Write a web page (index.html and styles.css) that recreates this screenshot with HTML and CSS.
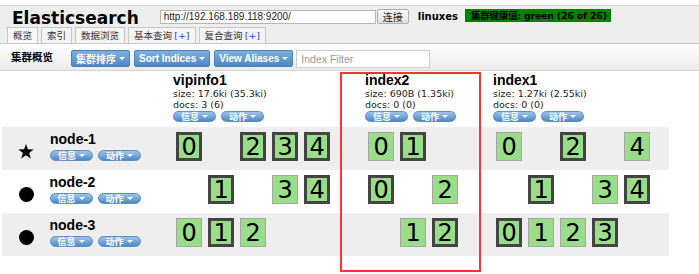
FILE: index.html
```html
<!DOCTYPE html>
<html lang="zh-CN">
<head>
    <meta charset="UTF-8">
    <meta name="viewport" content="width=device-width, initial-scale=1.0">
    <title>Elasticsearch</title>

    <link rel="stylesheet" href="styles.css">

</head>
<body>
<div class="app">
    <div class="header">
        <div class="header-top">
            <h1 class="logo">Elasticsearch</h1>
            <input class="url" type="text" value="http://192.168.189.118:9200/">
            <button class="connect" type="button">连接</button>
            <span class="cluster-name">linuxes</span>
            <span class="health">集群健康值: green (26 of 26)</span>
        </div>
        <ul class="tabs">
            <li class="active">概览</li>
            <li>索引</li>
            <li>数据浏览</li>
            <li>基本查询 <span class="plus">[+]</span></li>
            <li>复合查询 <span class="plus">[+]</span></li>
        </ul>
    </div>

    <div class="toolbar">
        <span class="toolbar-title">集群概览</span>
        <button class="menu-btn" type="button">集群排序<span class="caret"></span></button>
        <button class="menu-btn" type="button">Sort Indices<span class="caret"></span></button>
        <button class="menu-btn" type="button">View Aliases<span class="caret"></span></button>
        <input class="filter" type="text" placeholder="Index Filter">
    </div>

    <table class="cluster">
        <tr class="index-row">
            <td></td>
            <td class="index-head">
                <div class="index-name">vipinfo1</div>
                <div class="meta">size: 17.6ki (35.3ki)</div>
                <div class="meta">docs: 3 (6)</div>
                <div class="pills"><span class="pill">信息<span class="caret"></span></span><span class="pill">动作<span class="caret"></span></span></div>
            </td>
            <td class="index-head">
                <div class="index-name">index2</div>
                <div class="meta">size: 690B (1.35ki)</div>
                <div class="meta">docs: 0 (0)</div>
                <div class="pills"><span class="pill">信息<span class="caret"></span></span><span class="pill">动作<span class="caret"></span></span></div>
            </td>
            <td class="index-head">
                <div class="index-name">index1</div>
                <div class="meta">size: 1.27ki (2.55ki)</div>
                <div class="meta">docs: 0 (0)</div>
                <div class="pills"><span class="pill">信息<span class="caret"></span></span><span class="pill">动作<span class="caret"></span></span></div>
            </td>
        </tr>

        <!-- node-1 -->
        <tr class="node-row odd">
            <td class="node">
                <div class="node-box">
                    <svg class="icon" width="16" height="15" viewBox="0 0 16 15"><polygon points="8,0 9.9,5.3 15.6,5.4 11.1,8.9 12.8,14.6 8,11.2 3.2,14.6 4.9,8.9 0.4,5.4 6.1,5.3" fill="#000"/></svg>
                    <div class="node-info">
                        <div class="node-name">node-1</div>
                        <div class="pills"><span class="pill">信息<span class="caret"></span></span><span class="pill">动作<span class="caret"></span></span></div>
                    </div>
                </div>
            </td>
            <td class="shards">
                <span class="shard primary">0</span><span class="shard none"></span><span class="shard primary">2</span><span class="shard primary">3</span><span class="shard primary">4</span>
            </td>
            <td class="shards">
                <span class="shard">0</span><span class="shard primary">1</span><span class="shard none"></span>
            </td>
            <td class="shards">
                <span class="shard">0</span><span class="shard none"></span><span class="shard primary">2</span><span class="shard none"></span><span class="shard">4</span>
            </td>
        </tr>

        <!-- node-2 -->
        <tr class="node-row">
            <td class="node">
                <div class="node-box">
                    <span class="icon dot"></span>
                    <div class="node-info">
                        <div class="node-name">node-2</div>
                        <div class="pills"><span class="pill">信息<span class="caret"></span></span><span class="pill">动作<span class="caret"></span></span></div>
                    </div>
                </div>
            </td>
            <td class="shards">
                <span class="shard none"></span><span class="shard primary">1</span><span class="shard none"></span><span class="shard">3</span><span class="shard primary">4</span>
            </td>
            <td class="shards">
                <span class="shard primary">0</span><span class="shard none"></span><span class="shard">2</span>
            </td>
            <td class="shards">
                <span class="shard none"></span><span class="shard primary">1</span><span class="shard none"></span><span class="shard">3</span><span class="shard primary">4</span>
            </td>
        </tr>

        <!-- node-3 -->
        <tr class="node-row odd">
            <td class="node">
                <div class="node-box">
                    <span class="icon dot"></span>
                    <div class="node-info">
                        <div class="node-name">node-3</div>
                        <div class="pills"><span class="pill">信息<span class="caret"></span></span><span class="pill">动作<span class="caret"></span></span></div>
                    </div>
                </div>
            </td>
            <td class="shards">
                <span class="shard">0</span><span class="shard primary">1</span><span class="shard">2</span>
            </td>
            <td class="shards">
                <span class="shard none"></span><span class="shard">1</span><span class="shard primary">2</span>
            </td>
            <td class="shards">
                <span class="shard primary">0</span><span class="shard">1</span><span class="shard">2</span><span class="shard primary">3</span>
            </td>
        </tr>
    </table>

    <div class="mark"></div>
</div>
</body>
</html>
```

FILE: styles.css
```css
* {
    box-sizing: border-box;
}

body {
    margin: 0;
    background: #fff;
    color: #000;
    font-family: "DejaVu Sans", "Noto Sans CJK SC", sans-serif;
}

.app {
    position: relative;
    min-height: 274px;
}

/* header */
.header {
    margin-top: 5px;
    border-top: 1px solid #d9d9d9;
    background: #eee;
}

.header-top {
    display: flex;
    align-items: center;
    height: 21px;
    padding-left: 12px;
}

.logo {
    margin: 2px 0 0;
    font: bold 17px/20px "DejaVu Sans", sans-serif;
}

.url {
    width: 216px;
    height: 14px;
    margin-left: 21px;
    padding: 0 3px;
    border: 1px solid #b5b5b5;
    background: #fff;
    color: #222;
    font: 10px "Liberation Sans", sans-serif;
}

.connect {
    height: 15px;
    margin-left: 1px;
    padding: 0 5px;
    border: 1px solid #adadad;
    border-radius: 2px;
    background: linear-gradient(#fafafa, #e0e0e0);
    color: #222;
    font: 10px/13px "Noto Sans CJK SC", sans-serif;
}

.cluster-name {
    margin-left: 9px;
    font: bold 10px "DejaVu Sans", sans-serif;
}

.health {
    height: 13px;
    margin: -3px 0 0 7px;
    padding: 0 4px 0 6px;
    background: #008000;
    color: #000;
    font: bold 9.5px/13px "DejaVu Sans", "Noto Sans CJK SC", sans-serif;
    letter-spacing: -0.25px;
    white-space: nowrap;
}

.tabs {
    display: flex;
    gap: 3px;
    height: 16px;
    margin: 0;
    padding: 0 0 0 7px;
    list-style: none;
}

.tabs li {
    height: 16px;
    padding: 0 5px;
    border: 1px solid #c6c6c6;
    border-bottom: 0;
    background: #f4f4f4;
    color: #333;
    font: 9.5px/15px "Noto Sans CJK SC", sans-serif;
}

.tabs li.active {
    background: #f8f8f8;
}

.plus {
    color: #2a3fd0;
    font-family: "DejaVu Sans", sans-serif;
}

/* toolbar */
.toolbar {
    display: flex;
    align-items: flex-start;
    height: 28px;
    padding: 6px 0 0 11px;
    border-top: 1px solid #c9c9c9;
    border-bottom: 1px solid #d5d5d5;
    background: linear-gradient(#fff, #ebebeb);
}

.toolbar-title {
    margin-right: 18px;
    font: bold 10.5px/14px "Noto Sans CJK SC", sans-serif;
}

.menu-btn {
    display: flex;
    align-items: center;
    gap: 3px;
    height: 17px;
    margin-right: 4px;
    padding: 0 4px;
    border: 1px solid #4c80b9;
    border-radius: 2px;
    background: linear-gradient(#7fb0e0, #4f87c3);
    color: #fff;
    font: bold 10px "Liberation Sans", "Noto Sans CJK SC", sans-serif;
}

.caret {
    width: 0;
    height: 0;
    border-left: 3px solid transparent;
    border-right: 3px solid transparent;
    border-top: 3px solid #fff;
}

.filter {
    width: 134px;
    height: 18px;
    margin-left: -1px;
    padding: 0 4px;
    border: 1px solid #ccc;
    background: #fff;
    font: 10.5px "Liberation Sans", sans-serif;
}

.filter::placeholder {
    color: #999;
}

/* cluster table */
.cluster {
    border-collapse: collapse;
    margin-left: 2px;
}

.cluster td {
    padding: 0 16px;
    vertical-align: top;
}

.index-row {
    height: 56px;
}

.index-row td {
    padding-top: 1px;
}

.index-name {
    font: bold 14px/16px "Liberation Sans", sans-serif;
}

.meta {
    font-size: 9.5px;
    line-height: 11px;
    color: #222;
}

.pills {
    display: flex;
    gap: 5px;
    margin-top: 1px;
}

.node .pills {
    margin-top: 3px;
}

.pill {
    display: inline-flex;
    align-items: center;
    gap: 3px;
    height: 11px;
    padding: 0 7px;
    border: 1px solid #5b8fc7;
    border-radius: 6px;
    background: linear-gradient(#a0c4e9, #4e88c6);
    color: #fff;
    font: bold 9px/9px "Noto Sans CJK SC", sans-serif;
}

.node-row {
    height: 43px;
}

.node-row.odd {
    background: #eee;
}

.node-row td.node {
    padding-top: 4px;
}

.node-row td.shards {
    padding-top: 5px;
    white-space: nowrap;
}

.node-box {
    display: flex;
    gap: 16px;
}

.icon {
    flex: none;
    margin-top: 13px;
}

.dot {
    width: 15px;
    height: 15px;
    margin-left: 0.5px;
    border-radius: 50%;
    background: #000;
}

.node-name {
    font: bold 14px/16px "Liberation Sans", sans-serif;
}

.shard {
    display: inline-flex;
    align-items: center;
    justify-content: center;
    width: 26px;
    height: 29px;
    margin: 0 3px;
    border: 1px solid #a5a5a5;
    background: #99dd88;
    font: 24px "DejaVu Sans", sans-serif;
    vertical-align: top;
}

.shard.primary {
    border: 3px solid #444;
}

.shard.none {
    visibility: hidden;
}

/* red annotation frame drawn over the index2 column */
.mark {
    position: absolute;
    left: 340px;
    top: 67px;
    width: 141px;
    height: 200px;
    border: 2px solid #f33;
}
```
